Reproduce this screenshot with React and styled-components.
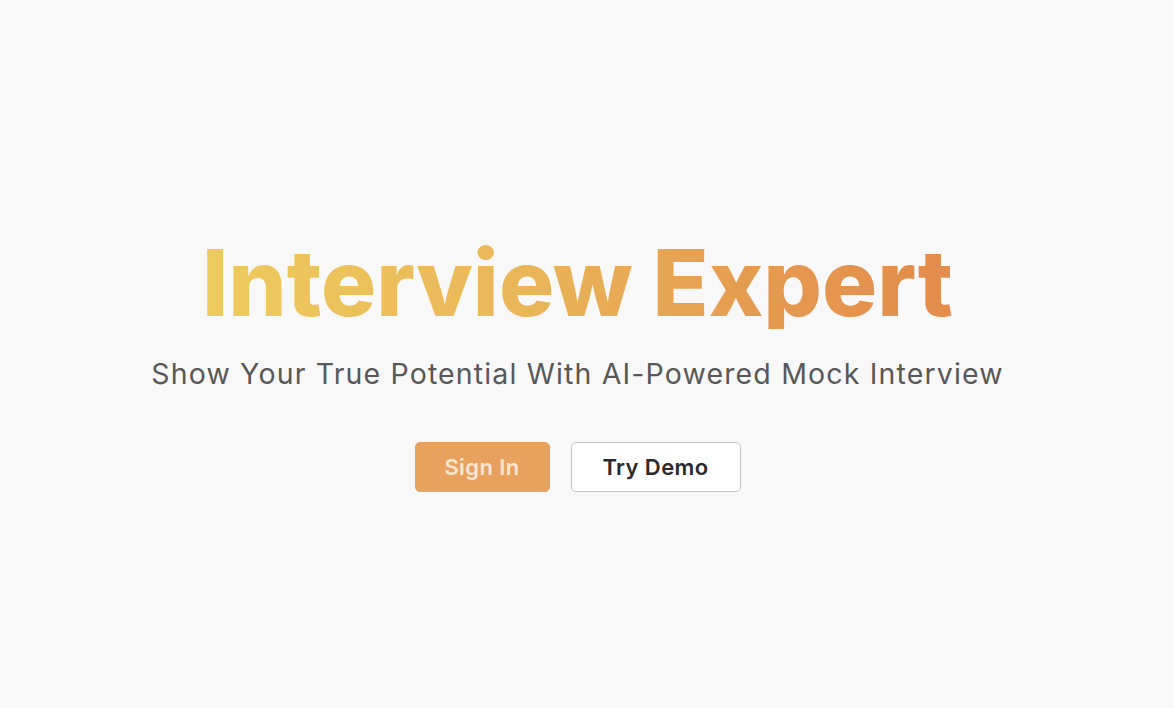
import React from "react";
import styled, { createGlobalStyle } from "styled-components";

const GlobalStyle = createGlobalStyle`
  html, body {
    margin: 0;
    padding: 0;
    background: #f8f8f8;
  }
  body {
    font-family: Inter, "Liberation Sans", sans-serif;
  }
`;

const Page = styled.main`
  width: 100vw;
  height: 100vh;
  display: flex;
  flex-direction: column;
  align-items: center;
  justify-content: center;
  padding: 21px 19px 0 0;
  box-sizing: border-box;
  background: #f8f8f8;
`;

const Title = styled.h1`
  margin: 0;
  font-family: Inter, sans-serif;
  font-size: 92px;
  font-weight: 800;
  letter-spacing: 0px;
  line-height: 1;
  background: linear-gradient(90deg, #eecb5e 0%, #eab858 40%, #e69c50 72%, #e38c4c 100%);
  -webkit-background-clip: text;
  background-clip: text;
  color: transparent;
`;

const Subtitle = styled.p`
  margin: 31px 0 0;
  font-family: Inter, sans-serif;
  font-size: 28.5px;
  line-height: 1;
  font-weight: 400;
  letter-spacing: 1.15px;
  color: #585858;
`;

const Buttons = styled.div`
  display: flex;
  gap: 21px;
  margin-top: 53px;
`;

const Button = styled.button`
  height: 50px;
  width: ${(props) => props.width}px;
  padding: 0;
  border-radius: 5px;
  font-family: Inter, sans-serif;
  font-size: 22px;
  font-weight: 600;
  letter-spacing: 0.4px;
  cursor: pointer;
  border: 1px solid ${(props) => (props.primary ? "#e8a25e" : "#c4c4c4")};
  background: ${(props) => (props.primary ? "#e8a25e" : "#ffffff")};
  color: ${(props) => (props.primary ? "#fbe6cf" : "#2a2a2a")};
`;

const App = () => {
  return (
    <>
      <GlobalStyle />
      <Page>
        <Title>Interview Expert</Title>
        <Subtitle>Show Your True Potential With AI-Powered Mock Interview</Subtitle>
        <Buttons>
          <Button primary width={135}>Sign In</Button>
          <Button width={170}>Try Demo</Button>
        </Buttons>
      </Page>
    </>
  );
};

export default App;
